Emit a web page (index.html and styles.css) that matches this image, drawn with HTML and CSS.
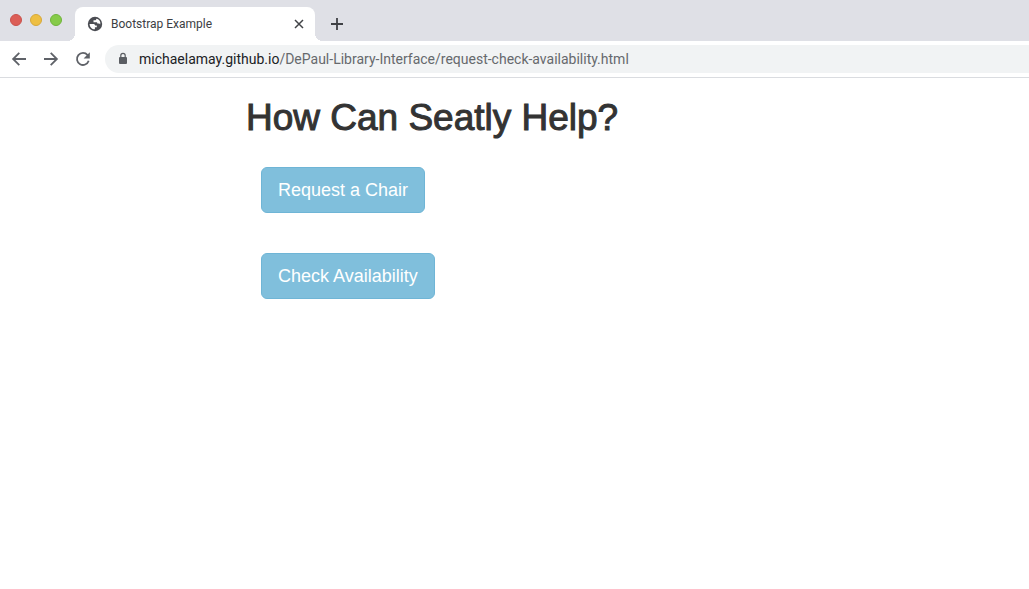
FILE: index.html
```html
<!DOCTYPE html>
<html lang="en">
<head>
<meta charset="utf-8">
<title>Bootstrap Example</title>
<link rel="stylesheet" href="styles.css">
</head>
<body>
<header class="browser">
  <div class="tab-strip">
    <div class="window-controls">
      <button class="dot dot-close" aria-label="Close window"></button>
      <button class="dot dot-minimize" aria-label="Minimize window"></button>
      <button class="dot dot-zoom" aria-label="Zoom window"></button>
    </div>
    <div class="tab">
      <svg class="icon" width="16" height="16" viewBox="0 0 16 16" aria-hidden="true">
        <circle cx="8" cy="8" r="7.2" fill="#4b4d53"/>
        <path d="M2.600 7.900h3.600c1.200 0 1.900.7 1.900 1.700h1.700v1.700H7.900v1.900C5 13.300 2.600 11 2.600 7.900z" fill="#fff"/>
        <path d="M9.300 2.800c0 1-.6 1.500-1.500 1.500H6.500v2h2.600c.8 0 1.300.5 1.300 1.300h1.500c.6 0 1 .3 1.300.8.300-1 .2-2.100-.3-3.100-.7-1.400-2-2.300-3.600-2.500z" fill="#fff"/>
      </svg>
      <span class="tab-title">Bootstrap Example</span>
      <button class="icon-button" aria-label="Close tab">
        <svg class="icon" width="16" height="16" viewBox="0 0 16 16"><path d="M4 4l8 8M12 4l-8 8" fill="none" stroke="#414347" stroke-width="1.500"/></svg>
      </button>
    </div>
    <button class="icon-button new-tab" aria-label="New tab">
      <svg class="icon" width="16" height="16" viewBox="0 0 16 16"><path d="M8 2v12M2 8h12" fill="none" stroke="#3f4145" stroke-width="1.800"/></svg>
    </button>
  </div>
  <nav class="toolbar" aria-label="Browser navigation">
    <button class="icon-button" aria-label="Back">
      <svg class="icon" width="16" height="16" viewBox="0 0 16 16"><path d="M15 8H2.500M8.300 1.800L2.100 8l6.200 6.200" fill="none" stroke="#5f6268" stroke-width="1.800"/></svg>
    </button>
    <button class="icon-button" aria-label="Forward">
      <svg class="icon" width="16" height="16" viewBox="0 0 16 16"><path d="M1 8h12.500M7.700 1.800L13.900 8l-6.200 6.200" fill="none" stroke="#5f6268" stroke-width="1.800"/></svg>
    </button>
    <button class="icon-button" aria-label="Reload">
      <svg class="icon" width="16" height="16" viewBox="0 0 16 16"><path d="M13.700 9.800A6 6 0 1 1 12.600 4.100" fill="none" stroke="#5f6268" stroke-width="1.800"/><path d="M14.800 1.200v6.200H8.600z" fill="#5f6268"/></svg>
    </button>
    <div class="address-bar">
      <svg class="icon" width="12" height="14" viewBox="0 0 12 14" aria-hidden="true"><rect x="2" y="5" width="8" height="7" rx="1" fill="#5b5e63"/><path d="M3.800 5.500V3.500a2.200 2.200 0 0 1 4.400 0v2" fill="none" stroke="#5b5e63" stroke-width="1.200"/></svg>
      <div class="address" role="textbox" contenteditable="true" spellcheck="false" aria-label="Address">michaelamay.github.io<span class="path">/DePaul-Library-Interface/request-check-availability.html</span></div>
    </div>
  </nav>
</header>
<main class="page">
  <h1 class="heading">How Can Seatly Help?</h1>
  <div class="actions">
    <button class="action">Request a Chair</button>
    <button class="action">Check Availability</button>
  </div>
</main>
</body>
</html>
```
FILE: styles.css
```css
* {
  box-sizing: border-box;
}

body {
  margin: 0;
  background: #fff;
  color: #333;
  font-family: "Liberation Sans", Arial, sans-serif;
}

button {
  margin: 0;
  font: inherit;
  cursor: pointer;
}

.icon {
  display: block;
  flex: none;
}

.browser {
  font-family: Roboto, sans-serif;
  border-bottom: 1px solid #dadce0;
}

.tab-strip {
  display: flex;
  align-items: flex-end;
  height: 41px;
  background: #dfe0e6;
}

.window-controls {
  display: flex;
  gap: 8px;
  align-self: flex-start;
  padding: 14px 13px 0 10px;
}

.dot {
  width: 12px;
  height: 12px;
  padding: 0;
  border: 1px solid;
  border-radius: 50%;
}

.dot-close {
  background: #dc5e57;
  border-color: #ca524c;
}

.dot-minimize {
  background: #eebf42;
  border-color: #d6a93a;
}

.dot-zoom {
  background: #86cb49;
  border-color: #70b43b;
}

.tab {
  position: relative;
  display: flex;
  align-items: center;
  gap: 8px;
  width: 240px;
  height: 34px;
  padding: 0 8px 0 12px;
  background: #fff;
  border-radius: 8px 8px 0 0;
}

.tab::before,
.tab::after {
  content: "";
  position: absolute;
  bottom: 0;
  width: 8px;
  height: 8px;
}

.tab::before {
  right: 100%;
  background: radial-gradient(circle at 0 0, #dfe0e6 8px, #fff 8px);
}

.tab::after {
  left: 100%;
  background: radial-gradient(circle at 100% 0, #dfe0e6 8px, #fff 8px);
}

.tab-title {
  flex: 1;
  font-size: 12px;
  line-height: 16px;
  color: #3c4043;
}

.icon-button {
  padding: 0;
  border: 0;
  background: none;
}

.new-tab {
  margin: 0 0 9px 14px;
}

.toolbar {
  display: flex;
  align-items: center;
  gap: 16px;
  height: 36px;
  padding-left: 11px;
}

.address-bar {
  display: flex;
  flex: 1;
  align-items: center;
  gap: 10px;
  height: 28px;
  margin-left: -2px;
  padding-left: 12px;
  background: #f1f3f4;
  border-radius: 14px 0 0 14px;
}

.address {
  flex: 1;
  font-size: 14px;
  line-height: 20px;
  color: #202124;
  white-space: nowrap;
  outline: none;
}

.path {
  color: #66696d;
}

.page {
  padding: 20px 16px 20px 23.9%;
}

.heading {
  margin: 0;
  font-size: 37px;
  font-weight: normal;
  line-height: 40px;
  -webkit-text-stroke: 1px #333;
}

.actions {
  display: flex;
  flex-direction: column;
  align-items: flex-start;
  gap: 40px;
  padding: 29px 15px 0;
}

.action {
  padding: 10px 16px;
  border: 1px solid #6fb5d6;
  border-radius: 6px;
  background: #80bfdc;
  color: #fff;
  font-size: 18px;
  line-height: 24px;
}
```
